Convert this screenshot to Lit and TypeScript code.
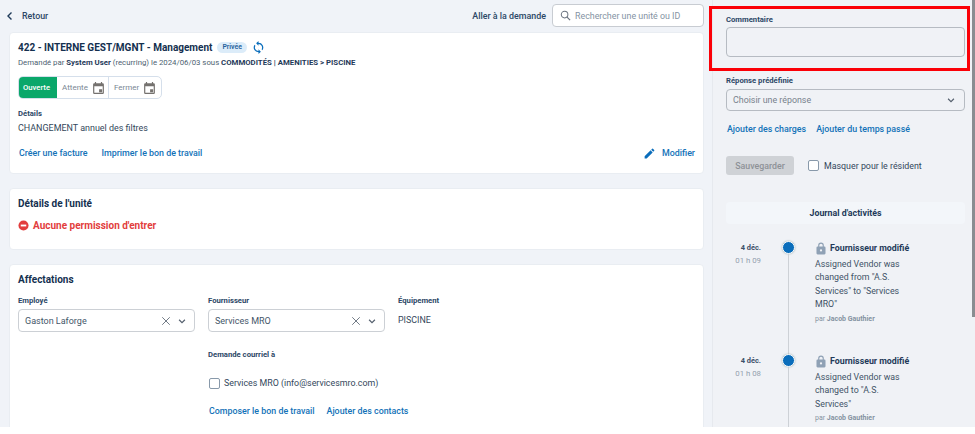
import { LitElement, html, css, svg } from "lit";
import { customElement } from "lit/decorators.js";

const cal = html`<svg class="cal" viewBox="3 1 18 20"><path fill="#75726f" d="M19 3h-1V1h-2v2H8V1H6v2H5a2 2 0 0 0-2 2v14a2 2 0 0 0 2 2h14a2 2 0 0 0 2-2V5a2 2 0 0 0-2-2zm0 16H5V8h14v11zm-6-6h5v5h-5z"/></svg>`;
const chev = html`<svg class="chev" viewBox="0 0 12 12"><path d="M2.5 4.5 6 8l3.5-3.5" fill="none" stroke="#55606e" stroke-width="1.4"/></svg>`;
const cross = html`<svg class="cross" viewBox="0 0 12 12"><path d="M1.5 1.5l9 9M10.5 1.5l-9 9" fill="none" stroke="#55606e" stroke-width="1"/></svg>`;
const lock = svg`<path fill="#8fa1b5" d="M18 8h-1V6a5 5 0 0 0-10 0v2H6a2 2 0 0 0-2 2v10a2 2 0 0 0 2 2h12a2 2 0 0 0 2-2V10a2 2 0 0 0-2-2zM9 6a3 3 0 0 1 6 0v2H9V6zm3 11a2 2 0 1 1 0-4 2 2 0 0 1 0 4z"/>`;

@customElement("app-root")
export class AppRoot extends LitElement {
  static styles = css`
    :host { display: block; width: 975px; height: 434px; background: #fff; overflow: hidden; font-family: Roboto, "Liberation Sans", sans-serif; color: #33475b; font-size: 9px; position: relative; }
    * { box-sizing: border-box; }
    .page { display: flex; height: 427px; overflow: hidden; background: #f0f3f8; }
    .main { width: 712px; flex: none; padding: 0 8px 0 9px; }
    .top { height: 32px; display: flex; align-items: center; }
    .back { width: 8px; height: 10px; margin-right: 8px; margin-left: -3px; }
    .retour { font-weight: 500; color: #2c4766; font-size: 8.85px; }
    .grow { flex: 1; }
    .goto { font-size: 8.9px; font-weight: 500; color: #2c4766; margin-right: 6px; }
    .search { width: 152px; height: 23px; border: 1px solid #c8ccd2; border-radius: 4px; background: #fff; display: flex; align-items: center; padding-left: 7px; gap: 4px; color: #8493a3; font-size: 8.85px; margin-top: -1px; }
    .search svg { width: 11px; height: 11px; }
    .card { background: #fff; border-radius: 4px; border: 1px solid #e9edf2; padding: 0 7px 0 8px; margin-bottom: 14px; }
    .c1 { height: 142px; padding-top: 7px; }
    .c2 { height: 62px; padding-top: 8px; }
    .c3 { height: 200px; padding-top: 8px; }
    .title { display: flex; align-items: center; font-size: 10px; font-weight: 700; color: #14304f; height: 14px; }
    .badge { background: #dcecf9; color: #27629c; font-size: 6.9px; font-weight: 600; border-radius: 6px; height: 11px; line-height: 11px; padding: 0 5.5px; margin-left: 4.5px; }
    .sync { width: 11px; height: 13px; margin-left: 6px; }
    .sub { font-size: 7.8px; color: #4e5f72; margin-top: 3px; line-height: 11px; }
    .sub b { color: #1f3a59; font-weight: 700; }
    .seg { display: inline-flex; height: 23px; border: 1px solid #d5dfeb; border-radius: 5px; margin-top: 8px; overflow: hidden; vertical-align: top; }
    .seg div { display: flex; align-items: center; font-size: 8px; color: #7a8794; padding: 0 4px 0 5px; gap: 5px; border-right: 1px solid #d5dfeb; }
    .seg div:last-child { border-right: 0; }
    .seg .on { background: #0aa76a; color: #fff; width: 39px; margin: -1px 0 -1px -1px; padding: 0 0 0 5px; font-size: 7.7px; font-weight: 500; border-radius: 5px 0 0 5px; border: 0; }
    .a1 { width: 52px; } .a2 { width: 52px; }
    .cal { width: 11px; height: 12px; flex: none; }
    .lbl { font-size: 7.7px; font-weight: 700; color: #2c4766; line-height: 10px; }
    .d { margin-top: 10px; }
    .txt { font-size: 8.95px; color: #33475b; margin-top: 4px; line-height: 11px; }
    .links { display: flex; gap: 14px; color: #1272b8; font-weight: 500; font-size: 8.85px; line-height: 11px; }
    .c1 .links { margin-top: 13px; padding-left: 1px; align-items: center; height: 13px; }
    .edit { display: flex; align-items: center; gap: 6px; margin-right: 1px; }
    .edit svg { width: 13px; height: 13px; }
    h3 { margin: 0; font-size: 10px; font-weight: 700; color: #14304f; line-height: 14px; }
    .err { display: flex; align-items: center; gap: 4px; color: #e23d3d; font-weight: 700; font-size: 10px; margin-top: 7px; height: 14px; }
    .err svg { width: 11px; height: 11px; }
    .cols { display: grid; grid-template-columns: 190px 190px 1fr; margin-top: 9px; }
    .select { height: 23px; border: 1px solid #ccd0d5; border-radius: 4px; display: flex; align-items: center; padding: 0 7px 0 6px; margin-top: 3px; width: 177px; font-size: 9px; color: #445669; gap: 6px; }
    .select .v { flex: 1; }
    .cross { width: 10px; height: 10px; }
    .chev { width: 10px; height: 10px; }
    .val { font-size: 8.9px; margin-top: 9px; line-height: 11px; }
    .mail { margin-left: 190px; margin-top: 18px; }
    .check { display: flex; align-items: center; gap: 4px; font-size: 8.85px; margin-top: 17px; line-height: 12px; padding-left: 1px; }
    .box { width: 11px; height: 11px; border: 1px solid #8899aa; border-radius: 2px; background: #fff; flex: none; }
    .mail .links { margin-top: 17px; gap: 12px; padding-left: 1px; }
    .side { flex: 1; min-width: 0; border-left: 1px solid #e6e9ee; background: #f0f2f6; padding: 14px 9px 0 13px; position: relative; }
    .side .lbl { line-height: 11px; }
    .ta { width: 239px; height: 30px; border: 1px solid #b6bbc2; border-radius: 4px; margin-top: 2px; }
    .rp { margin-top: 18px; }
    .sel2 { width: 239px; height: 22px; border: 1px solid #b6bbc2; border-radius: 4px; margin-top: 3px; display: flex; align-items: center; justify-content: space-between; padding: 0 8px 0 6px; font-size: 8.85px; color: #77818c; }
    .side .links { margin-top: 13px; gap: 10px; padding-left: 1px; }
    .save { display: flex; align-items: center; margin-top: 21px; gap: 14px; }
    .btn { width: 68px; height: 19px; background: #cfd2d6; border-radius: 3px; display: flex; align-items: center; justify-content: center; color: #8d9196; font-size: 8.8px; font-weight: 500; }
    .save .check { margin: 0; gap: 5px; padding: 0; color: #33475b; }
    .jh { width: 239px; height: 22px; background: #f3f6fa; border-radius: 4px; margin-top: 27px; display: flex; align-items: center; justify-content: center; font-size: 8.8px; font-weight: 700; color: #1f3a59; }
    .tl { margin-top: 17px; }
    .ev { display: flex; height: 113px; }
    .ev.last { height: 80px; }
    .when { width: 35px; text-align: right; font-size: 7.8px; line-height: 13.4px; flex: none; color: #93a0ae; }
    .when b { display: block; color: #3c5068; font-weight: 700; font-size: 7.4px; }
    .rail { width: 32px; margin-left: 11px; flex: none; display: flex; flex-direction: column; align-items: center; }
    .dot { width: 13px; height: 13px; border-radius: 50%; background: #0a6dbb; border: 1.5px solid #fff; box-shadow: 0 0 2px #9aa; flex: none; }
    .line { flex: 1; width: 1px; background: #cdd1d6; }
    .body { padding-left: 11px; width: 120px; flex: none; }
    .head { display: flex; align-items: center; font-size: 8.8px; font-weight: 700; color: #1f3a59; gap: 3px; height: 14px; white-space: nowrap; }
    .head svg { width: 12px; height: 13px; margin-left: 0; }
    .msg { font-size: 8.8px; line-height: 13.4px; color: #3f5266; margin-top: 3px; white-space: nowrap; }
    .by { font-size: 7px; color: #8593a2; line-height: 10px; margin-top: 2px; white-space: nowrap; }
    .by b { font-weight: 700; }
    .scroll { position: absolute; right: 0; top: 0; width: 3px; height: 317px; background: #8a8d91; }
    .mark { position: absolute; left: 709px; top: 6px; width: 261px; height: 65px; border: 3px solid #fb0007; pointer-events: none; }
  `;

  event(day: string, time: string, lines: string[], last = false) {
    return html`<div class="ev ${last ? "last" : ""}">
      <div class="when"><b>${day}</b>${time}</div>
      <div class="rail"><div class="dot"></div><div class="line"></div></div>
      <div class="body">
        <div class="head"><svg viewBox="3 0 18 23">${lock}</svg>Fournisseur modifié</div>
        <div class="msg">${lines.map((l) => html`${l}<br />`)}</div>
        <div class="by">par <b>Jacob Gauthier</b></div>
      </div>
    </div>`;
  }

  render() {
    return html`<div class="page">
        <div class="main">
          <div class="top">
            <svg class="back" viewBox="0 0 8 10"><path d="M5.5 1.5 2 5l3.5 3.5" fill="none" stroke="#1f3a59" stroke-width="1.4"/></svg>
            <span class="retour">Retour</span>
            <span class="grow"></span>
            <span class="goto">Aller à la demande</span>
            <div class="search">
              <svg viewBox="0 0 12 12"><circle cx="5" cy="5" r="3.6" fill="none" stroke="#6b7480" stroke-width="1.1"/><path d="M7.7 7.7 11 11" stroke="#6b7480" stroke-width="1.3"/></svg>
              Rechercher une unité ou ID
            </div>
          </div>
          <div class="card c1">
            <div class="title">422 - INTERNE GEST/MGNT - Management
              <span class="badge">Privée</span>
              <svg class="sync" viewBox="3 1 18 22"><path fill="#0a6dbb" d="M12 4V1L8 5l4 4V6a6 6 0 0 1 5.2 9l1.5 1.5A8 8 0 0 0 12 4zm0 14a6 6 0 0 1-5.2-9L5.3 7.5A8 8 0 0 0 12 20v3l4-4-4-4v3z"/></svg>
            </div>
            <div class="sub">Demandé par <b>System User</b> (recurring) le 2024/06/03 sous <b>COMMODITÉS | AMENITIES &gt; PISCINE</b></div>
            <div class="seg">
              <div class="on">Ouverte</div>
              <div class="a1">Attente ${cal}</div>
              <div class="a2">Fermer ${cal}</div>
            </div>
            <div class="lbl d">Détails</div>
            <div class="txt">CHANGEMENT annuel des filtres</div>
            <div class="links">
              <span>Créer une facture</span><span>Imprimer le bon de travail</span>
              <span class="grow"></span>
              <span class="edit"><svg viewBox="0 0 24 24"><path fill="#0a6dbb" d="M3 17.25V21h3.75L17.81 9.94l-3.75-3.75L3 17.25zM20.71 7.04a1 1 0 0 0 0-1.41l-2.34-2.34a1 1 0 0 0-1.41 0l-1.83 1.83 3.75 3.75 1.83-1.83z"/></svg>Modifier</span>
            </div>
          </div>
          <div class="card c2">
            <h3>Détails de l'unité</h3>
            <div class="err"><svg viewBox="0 0 12 12"><circle cx="6" cy="6" r="5.5" fill="#e23d3d"/><rect x="3" y="5" width="6" height="2" fill="#fff"/></svg>Aucune permission d'entrer</div>
          </div>
          <div class="card c3">
            <h3>Affectations</h3>
            <div class="cols">
              <div><div class="lbl">Employé</div><div class="select"><span class="v">Gaston Laforge</span>${cross}${chev}</div></div>
              <div><div class="lbl">Fournisseur</div><div class="select"><span class="v">Services MRO</span>${cross}${chev}</div></div>
              <div><div class="lbl">Équipement</div><div class="val">PISCINE</div></div>
            </div>
            <div class="mail">
              <div class="lbl">Demande courriel à</div>
              <div class="check"><span class="box"></span>Services MRO (info@servicesmro.com)</div>
              <div class="links"><span>Composer le bon de travail</span><span>Ajouter des contacts</span></div>
            </div>
          </div>
        </div>
        <div class="side">
          <div class="lbl">Commentaire</div>
          <div class="ta"></div>
          <div class="lbl rp">Réponse prédéfinie</div>
          <div class="sel2">Choisir une réponse ${chev}</div>
          <div class="links"><span>Ajouter des charges</span><span>Ajouter du temps passé</span></div>
          <div class="save"><div class="btn">Sauvegarder</div><div class="check"><span class="box"></span>Masquer pour le résident</div></div>
          <div class="jh">Journal d'activités</div>
          <div class="tl">
            ${this.event("4 déc.", "01 h 09", ["Assigned Vendor was", 'changed from "A.S.', 'Services" to "Services', 'MRO"'])}
            ${this.event("4 déc.", "01 h 08", ["Assigned Vendor was", 'changed to "A.S.', 'Services"'], true)}
          </div>
          <div class="scroll"></div>
        </div>
      </div>
      <div class="mark"></div>`;
  }
}
